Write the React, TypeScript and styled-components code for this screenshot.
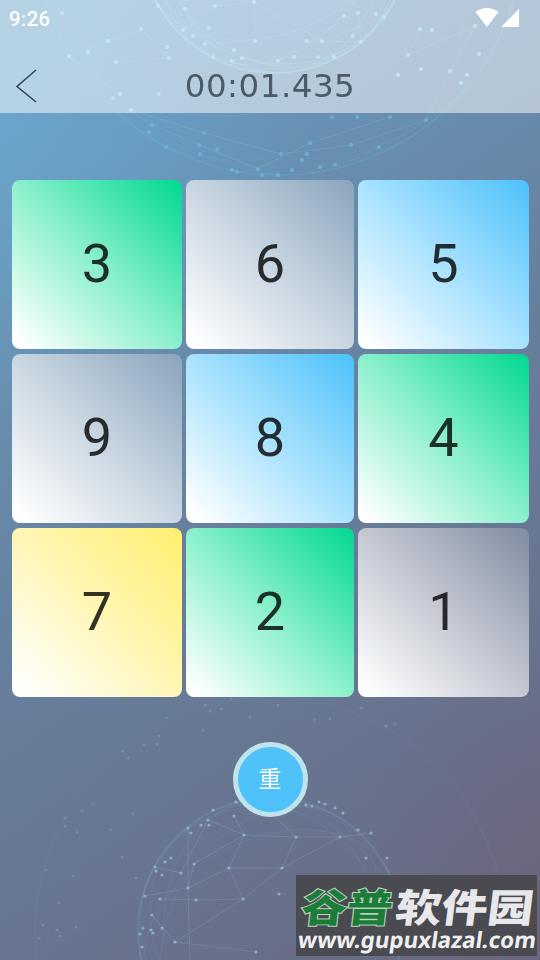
import React from "react";
import styled, { createGlobalStyle } from "styled-components";

const GlobalStyle = createGlobalStyle`
  * { box-sizing: border-box; }
  body { margin: 0; overflow: hidden; }
`;

const Screen = styled.main`
  position: relative;
  isolation: isolate;
  display: flex;
  flex-direction: column;
  width: 540px;
  height: 960px;
  overflow: hidden;
  font-family: Roboto, "Noto Sans CJK SC", sans-serif;
  background:
    radial-gradient(circle at 104% 89%, rgba(108, 98, 120, 0.5), rgba(108, 98, 120, 0) 210px),
    radial-gradient(circle at 0 13%, rgba(107, 170, 210, 0.55), rgba(107, 170, 210, 0) 300px),
    linear-gradient(145deg, #6ba3ca 0%, #6893b6 22%, #67809e 50%, #68728d 78%, #6b687f 100%);
`;

const Backdrop = styled.svg`
  position: absolute;
  inset: 0;
  z-index: -1;
`;

const Header = styled.header`
  display: flex;
  flex-direction: column;
  height: 113px;
  background: rgba(255, 255, 255, 0.51);
`;

const StatusBar = styled.div`
  display: flex;
  justify-content: space-between;
  height: 36px;
  padding: 8px 20px 0 9px;
`;

const Clock = styled.span`
  color: #fff;
  font-size: 20.5px;
  font-weight: 500;
  line-height: 23px;
  letter-spacing: 0.3px;
`;

const TitleBar = styled.div`
  display: grid;
  grid-template-columns: 54px 1fr 54px;
  align-items: center;
  height: 77px;
  padding-top: 23px;
`;

const BackButton = styled.button`
  display: flex;
  padding: 0 0 0 15px;
  border: 0;
  background: none;
`;

const Timer = styled.h1`
  margin: 0;
  color: #4b5a64;
  font: 400 32.5px/38px "DejaVu Sans", sans-serif;
  text-align: center;
  white-space: nowrap;
  letter-spacing: 0.5px;
`;

const Board = styled.section`
  display: grid;
  grid-template-columns: 170px 168px 171px;
  grid-template-rows: repeat(3, 169px);
  gap: 5px 4px;
  margin: 67px 11px 0 12px;
`;

const Tile = styled.button<{ $from: string; $mid: string; $to: string }>`
  display: flex;
  align-items: center;
  justify-content: center;
  padding: 0 0 1px;
  border: 0;
  border-radius: 8px;
  background: linear-gradient(45deg, ${(p) => p.$from} 4%, ${(p) => p.$mid} 50%, ${(p) => p.$to} 97%);
  color: rgba(0, 0, 0, 0.8);
  font: 400 54px/64px Roboto, sans-serif;
`;

const Controls = styled.div`
  display: flex;
  justify-content: center;
  margin-top: 45px;
`;

const ResetButton = styled.button`
  width: 75px;
  height: 75px;
  padding: 0 0 6px;
  border: 5px solid #bfe4eb;
  border-radius: 50%;
  background: #4fc2fa;
  color: #fff;
  font: 400 23px/30px "Noto Sans CJK SC", sans-serif;
`;

const Watermark = styled.aside`
  position: absolute;
  left: 296px;
  top: 875px;
  width: 241px;
  height: 81px;
  background: #4a4b51;
`;

const green = { $from: "#ffffff", $mid: "#8bf0cb", $to: "#08d994" };
const steel = { $from: "#ffffff", $mid: "#c9d6e1", $to: "#8da7be" };
const blue = { $from: "#ffffff", $mid: "#a9e2fe", $to: "#51c3fa" };
const yellow = { $from: "#ffffff", $mid: "#fff6b6", $to: "#fff074" };
const slate = { $from: "#ffffff", $mid: "#c5c8d3", $to: "#838fa3" };

const tiles = [
  { value: 3, tone: green },
  { value: 6, tone: steel },
  { value: 5, tone: blue },
  { value: 9, tone: steel },
  { value: 8, tone: blue },
  { value: 4, tone: green },
  { value: 7, tone: yellow },
  { value: 2, tone: green },
  { value: 1, tone: slate },
];

type Point = [number, number];

const upperDots: Point[] = [
  [62, 13], [69, 56], [88, 52], [108, 41], [116, 62], [141, 29], [167, 47], [169, 58],
  [158, 6], [185, 9], [183, 30], [193, 36], [205, 44], [213, 57], [234, 50], [242, 58],
  [215, 6], [209, 28], [255, 41], [232, 61], [254, 2], [278, 61], [294, 57], [307, 41],
  [322, 41], [344, 16], [358, 13], [376, 14], [384, 17], [353, 36], [361, 42], [334, 57],
  [318, 57], [420, 29], [432, 30], [408, 55], [421, 69], [398, 75], [475, 26], [479, 54],
  [450, 71], [467, 75], [461, 83], [113, 98], [120, 94], [131, 110], [159, 94], [152, 125],
  [149, 132], [166, 147], [204, 133], [199, 145], [217, 149], [200, 154], [232, 170],
  [237, 172], [258, 169], [262, 175], [281, 154], [307, 154], [310, 143], [302, 160],
  [292, 170], [278, 175], [320, 167], [335, 165], [332, 117], [357, 117], [390, 117],
  [426, 120], [351, 145], [379, 147],
];

const lowerDots: Point[] = [
  [167, 718], [205, 705], [210, 711], [221, 709], [231, 699], [250, 717], [203, 730],
  [159, 736], [157, 744], [144, 745], [123, 751], [128, 758], [93, 804], [82, 811],
  [65, 818], [65, 826], [77, 832], [111, 830], [133, 814], [122, 857], [46, 870],
  [73, 876], [136, 878], [59, 903], [43, 925], [57, 930], [60, 936], [39, 938],
  [76, 927], [278, 705], [315, 720], [330, 719], [361, 708], [386, 726], [395, 724],
  [236, 802], [234, 816], [244, 835], [213, 810], [208, 820], [209, 825], [201, 825],
  [188, 828], [191, 833], [171, 858], [165, 862], [155, 867], [156, 871], [162, 875],
  [181, 873], [194, 864], [188, 888], [145, 896], [160, 899], [196, 900], [229, 868],
  [243, 899], [152, 915], [143, 928], [140, 934], [151, 930], [153, 933], [162, 928],
  [142, 947], [175, 942], [256, 952], [306, 805], [312, 806], [319, 802], [325, 804],
  [335, 808], [343, 813], [358, 830], [371, 833], [366, 858], [387, 858], [340, 837],
  [296, 837], [282, 868], [279, 894],
];

const innerSpokes: Point[][] = [
  [[244, 835], [229, 868], [243, 899], [175, 942]],
  [[234, 816], [244, 835], [296, 837], [340, 837], [371, 833]],
  [[188, 888], [229, 868], [282, 868], [296, 837], [265, 808]],
  [[160, 899], [196, 900], [243, 899], [282, 868], [340, 837]],
  [[155, 867], [181, 873], [208, 820], [244, 835]],
  [[145, 896], [188, 888], [194, 864], [244, 835]],
  [[152, 915], [175, 942], [256, 952]],
  [[188, 828], [188, 888], [190, 960]],
];

const upperSpokes: Point[][] = [
  [[158, 6], [205, 44], [255, 41], [254, 2], [185, 9]],
  [[183, 30], [215, 6], [254, 2], [307, 41], [278, 61]],
  [[254, 2], [322, 41], [361, 42], [358, 13], [307, 41]],
  [[344, 0], [384, 17], [322, 41], [334, 57], [294, 57]],
  [[116, 62], [169, 58], [141, 29], [69, 56], [120, 94]],
  [[420, 29], [408, 55], [475, 26], [450, 71], [426, 120]],
  [[113, 98], [152, 125], [200, 145], [258, 169], [310, 143], [390, 117]],
  [[131, 110], [204, 133], [281, 154], [351, 145], [426, 120]],
];

const toPoints = (line: Point[]) => line.map((p) => p.join(",")).join(" ");

function Globe({ cx, cy, r, color, opacity }: { cx: number; cy: number; r: number; color: string; opacity: number }) {
  return (
    <g fill="none" stroke={color} opacity={opacity}>
      <circle cx={cx} cy={cy} r={r} strokeWidth="2" strokeOpacity="0.5" />
      {[0, 28, 55, 86, 122, 155].map((angle, i) => (
        <ellipse
          key={angle}
          cx={cx}
          cy={cy}
          rx={r}
          ry={r * (0.97 - i * 0.055)}
          strokeWidth="0.7"
          strokeOpacity="0.45"
          transform={`rotate(${angle} ${cx} ${cy})`}
        />
      ))}
    </g>
  );
}

function Network() {
  return (
    <Backdrop width="540" height="960" viewBox="0 0 540 960" aria-hidden="true">
      <defs>
        <radialGradient id="core">
          <stop offset="0" stopColor="#78a8dc" stopOpacity="0.35" />
          <stop offset="1" stopColor="#78a8dc" stopOpacity="0.08" />
        </radialGradient>
        <filter id="soft" x="-5%" y="-5%" width="110%" height="110%">
          <feGaussianBlur stdDeviation="0.6" />
        </filter>
      </defs>
      <circle cx="275" cy="-62" r="135" fill="url(#core)" />
      <g filter="url(#soft)">
        <Globe cx={275} cy={-62} r={135} color="#8de5ed" opacity={0.62} />
        <Globe cx={280} cy={-69} r={244} color="#70c9ee" opacity={0.3} />
        <Globe cx={270} cy={930} r={132} color="#82bddd" opacity={0.34} />
        <Globe cx={270} cy={932} r={235} color="#759fce" opacity={0.15} />
        <g fill="none" stroke="#acd4e7" strokeWidth="0.8" opacity="0.22">
          {[...upperSpokes, ...innerSpokes].map((line, i) => (
            <polyline key={i} points={toPoints(line)} />
          ))}
        </g>
        <g>
          {upperDots.map(([x, y]) => (
            <circle key={`${x}-${y}`} cx={x} cy={y} r="2" fill={y < 113 ? "#8bdbea" : "#6ebde8"} opacity={y < 113 ? 0.75 : 0.65} />
          ))}
        </g>
        <g>
          {lowerDots.map(([x, y], i) => (
            <circle key={`${x}-${y}`} cx={x} cy={y} r="1.6" fill={i < 35 ? "#719dca" : "#9bc7dd"} opacity={i < 35 ? 0.55 : 0.7} />
          ))}
        </g>
      </g>
    </Backdrop>
  );
}

export default function App() {
  return (
    <Screen>
      <GlobalStyle />
      <Network />
      <Header>
        <StatusBar>
          <Clock>9:26</Clock>
          <svg width="45" height="20" viewBox="0 0 45 20" fill="#fff" aria-label="Wi-Fi and signal">
            <path d="M0.5 4Q12-4 23.5 4L12 19Z" />
            <path d="M26 19L44 1V19Z" />
          </svg>
        </StatusBar>
        <TitleBar>
          <BackButton aria-label="Back">
            <svg width="23" height="34" viewBox="0 0 23 34" fill="none" stroke="#34434b" strokeWidth="1.5">
              <path d="M21 1L2 17.5L21 33" />
            </svg>
          </BackButton>
          <Timer>00:01.435</Timer>
        </TitleBar>
      </Header>
      <Board>
        {tiles.map(({ value, tone }) => <Tile key={value} {...tone}>{value}</Tile>)}
      </Board>
      <Controls>
        <ResetButton>重</ResetButton>
      </Controls>
      <Watermark>
        <svg width="241" height="81" viewBox="0 0 241 81">
          <g transform="translate(4 47) skewX(-7)" fontFamily="Noto Sans CJK SC, sans-serif" fontWeight="900" fontSize="39">
            <text x="0" y="0" textLength="91" lengthAdjust="spacingAndGlyphs" fill="#1c7d3a" stroke="#b8d4bf" strokeWidth="2" paintOrder="stroke">谷普</text>
            <text x="94" y="0" textLength="138" lengthAdjust="spacingAndGlyphs" fill="#e8e8eb">软件园</text>
          </g>
          <g transform="translate(1 73) skewX(-8)">
            <text x="0" y="0" textLength="238" lengthAdjust="spacingAndGlyphs" fill="#f0f0f2" fontFamily="Noto Sans, sans-serif" fontWeight="700" fontSize="22.5">www.gupuxlazal.com</text>
          </g>
        </svg>
      </Watermark>
    </Screen>
  );
}
